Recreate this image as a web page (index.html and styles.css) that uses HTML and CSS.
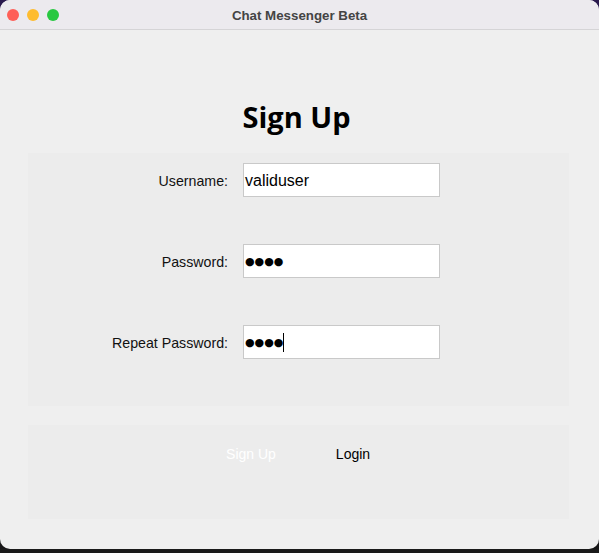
FILE: index.html
```html
<!DOCTYPE html>
<html>
<head>
<meta charset="utf-8">
<link rel="stylesheet" href="styles.css">
</head>
<body>
<div class="window">
  <div class="titlebar">
    <div class="lights">
      <span class="light red"></span>
      <span class="light yellow"></span>
      <span class="light green"></span>
    </div>
    <div class="title">Chat Messenger Beta</div>
  </div>
  <div class="content">
    <h1 class="heading">Sign Up</h1>
    <div class="panel form">
      <div class="row">
        <label class="label">Username:</label>
        <div class="field">validuser</div>
      </div>
      <div class="row">
        <label class="label">Password:</label>
        <div class="field dots">●●●●</div>
      </div>
      <div class="row">
        <label class="label">Repeat Password:</label>
        <div class="field dots">●●●●<span class="caret"></span></div>
      </div>
    </div>
    <div class="panel actions">
      <div class="buttons">
        <button class="btn btn-primary">Sign Up</button>
        <button class="btn">Login</button>
      </div>
    </div>
  </div>
</div>
<div class="dock"></div>
</body>
</html>
```
FILE: styles.css
```css
* { box-sizing: border-box; }
html, body { margin: 0; padding: 0; }
body {
  width: 599px;
  height: 553px;
  overflow: hidden;
  background: linear-gradient(#2a1a4e 0%, #1d1530 60%, #161616 100%);
  font-family: "Liberation Sans", Arial, sans-serif;
}
.window {
  height: 549px;
  background: #efefef;
  border-radius: 10px;
  overflow: hidden;
  display: flex;
  flex-direction: column;
}
.titlebar {
  height: 30px;
  background: #eceaee;
  border-bottom: 1px solid #d5d4d6;
  position: relative;
  display: flex;
  align-items: center;
  justify-content: center;
  flex-shrink: 0;
}
.lights {
  position: absolute;
  left: 7px;
  top: 9px;
  display: flex;
  gap: 8px;
}
.light {
  width: 12px;
  height: 12px;
  border-radius: 50%;
  display: block;
}
.red { background: #fe5f57; }
.yellow { background: #febc2e; }
.green { background: #28c840; }
.title {
  font-weight: bold;
  font-size: 13.3px;
  color: #444;
  padding-top: 1px;
}
.content {
  flex: 1;
  padding: 0 30px 0 28px;
  display: flex;
  flex-direction: column;
}
.heading {
  margin: 67px 0 16px;
  font-family: "Open Sans", sans-serif;
  font-weight: bold;
  font-size: 29px;
  line-height: 40px;
  text-align: center;
  color: #000;
  padding-right: 4px;
}
.panel {
  background: #ececec;
}
.form {
  padding: 10px 0 47px;
  display: flex;
  flex-direction: column;
  gap: 47px;
}
.row {
  display: flex;
  align-items: center;
  height: 34px;
}
.label {
  width: 200px;
  text-align: right;
  font-size: 14.2px;
  color: #111;
  padding-top: 1px;
}
.field {
  margin-left: 15px;
  width: 197px;
  height: 34px;
  background: #fff;
  border: 1px solid #c9c9c9;
  font-size: 16px;
  color: #000;
  padding: 1px 0 0 1px;
  display: flex;
  align-items: center;
}
.dots {
  font-family: "DejaVu Sans", sans-serif;
  font-size: 11px;
  letter-spacing: 0;
  padding-top: 0;
}
.caret {
  display: inline-block;
  width: 1px;
  height: 19px;
  background: #000;
  margin-left: 0;
}
.actions {
  margin-top: 19px;
  height: 94px;
  padding-top: 14px;
}
.buttons {
  display: flex;
  justify-content: center;
  gap: 12px;
  padding-left: 7px;
}
.btn {
  width: 90px;
  height: 30px;
  border: none;
  background: transparent;
  font-family: "Liberation Sans", Arial, sans-serif;
  font-size: 14px;
  color: #000;
  padding: 0;
}
.btn-primary { color: #ffffff; }
.dock {
  height: 4px;
  background: #1a1a1a;
}
```
